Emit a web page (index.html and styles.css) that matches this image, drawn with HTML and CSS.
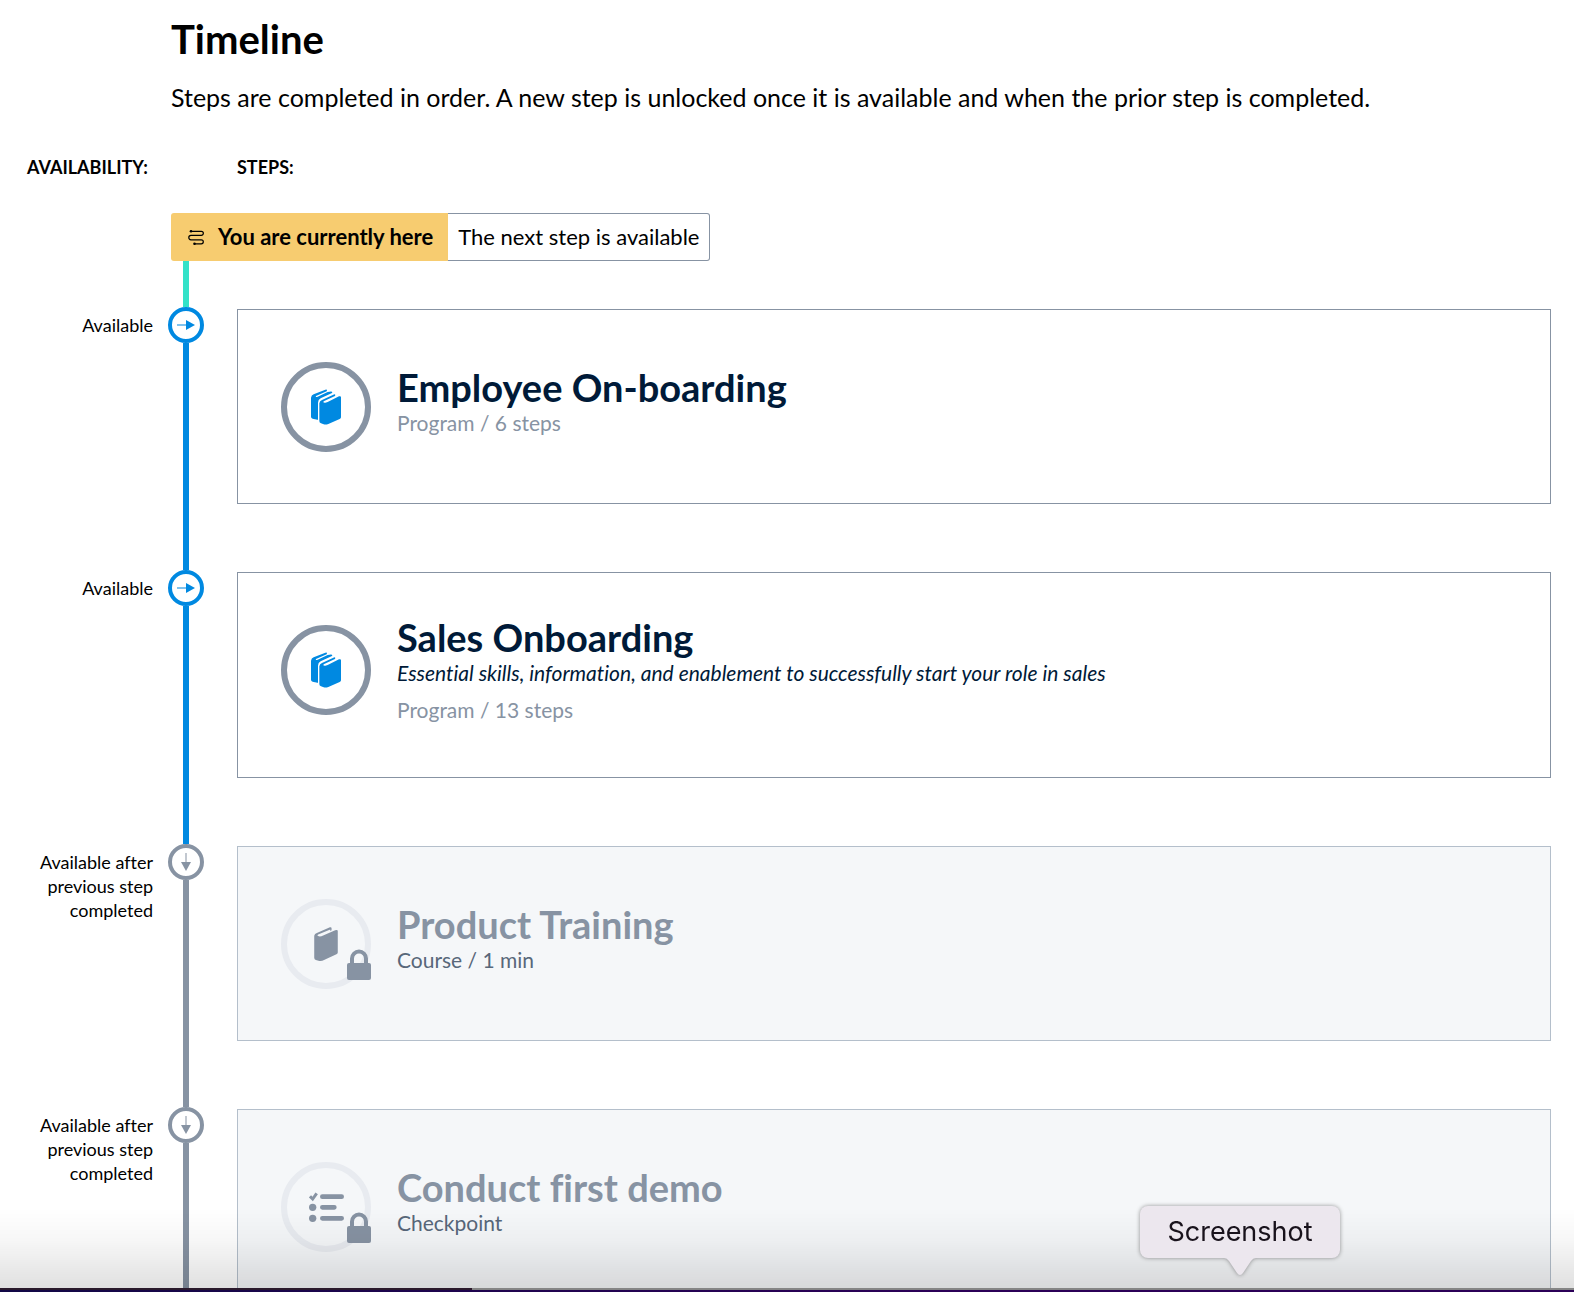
FILE: index.html
```html
<!DOCTYPE html>
<html lang="en">
<head>
    <meta charset="UTF-8">
    <meta name="viewport" content="width=device-width, initial-scale=1.0">
    <title>Timeline</title>
    <link rel="stylesheet" href="styles.css">
</head>
<body>
    <!-- Shared icons -->
    <svg class="sprite" aria-hidden="true">
        <symbol id="arrow" viewBox="0 0 18 12">
            <path d="M0 6h10" stroke="currentColor" stroke-width="2" opacity="0.5"/>
            <path d="M9 1l9 5-9 5z" fill="currentColor"/>
        </symbol>
        <symbol id="books" viewBox="0 0 90 106">
            <path fill="currentColor" d="M0 25Q1 18 8 15L43 1Q48-1 48 3L47 6L15 20Q12 24 20 22L50 8Q64 4 64 9L63 11L29 27Q21 31 21 40V91Q18 92 12 90L5 88Q0 86 0 82Z"/>
            <path fill="currentColor" d="M25 42Q26 35 33 32L67 16Q72 13 73 17L72 20L38 36Q34 41 43 40L50 38L84 21Q90 19 90 24V84Q90 87 86 89L52 104Q44 107 38 105L30 102Q25 100 25 95Z"/>
        </symbol>
        <symbol id="book" viewBox="0 0 72 104">
            <path fill="currentColor" d="M0 27Q1 20 8 18L48 1Q53 0 53 4V10L49 12V8L12 23Q6 28 17 29L22 28L64 10Q72 7 72 12V78Q72 81 68 83L30 101Q22 105 13 103L5 101Q0 99 0 94Z"/>
        </symbol>
        <symbol id="checklist" viewBox="0 0 105 90">
            <g fill="none" stroke="currentColor" stroke-linecap="round">
                <path d="M3 13l8 8L23 4" stroke-width="9" stroke-linecap="butt"/>
                <path d="M40 14h58M40 46h36M40 79h58" stroke-width="14"/>
            </g>
            <circle cx="11" cy="46" r="11" fill="currentColor"/>
            <circle cx="11" cy="79" r="11" fill="currentColor"/>
        </symbol>
        <symbol id="lock" viewBox="0 0 24 31">
            <path d="M5 15V9.500a7 7 0 0 1 14 0V15" fill="none" stroke="currentColor" stroke-width="4"/>
            <rect y="14" width="24" height="17" rx="2" fill="currentColor"/>
        </symbol>
    </svg>

    <main class="timeline">
        <header class="intro">
            <h1>Timeline</h1>
            <p>Steps are completed in order. A new step is unlocked once it is available and when the prior step is completed.</p>
        </header>

        <div class="columns">
            <span class="col-availability">Availability:</span>
            <span class="col-steps">Steps:</span>
        </div>

        <div class="current">
            <strong class="current-here">
                <svg class="icon-path" viewBox="0 0 16 15" fill="none" stroke="currentColor" stroke-width="1.200" aria-hidden="true">
                    <path d="M3 1.300h10.300a2 2 0 0 1 0 4.100H3a2.200 2.200 0 0 0 0 4.400h10.300a2 2 0 0 1 0 4H6"/>
                    <circle cx="3" cy="1.300" r="1.300" fill="currentColor" stroke="none"/>
                    <circle cx="6.500" cy="13.700" r="1.300" fill="currentColor" stroke="none"/>
                </svg>
                You are currently here
            </strong>
            <span class="current-next">The next step is available</span>
        </div>

        <ol class="steps">
            <li class="step">
                <p class="when">Available</p>
                <div class="track">
                    <span class="marker"><svg><use href="#arrow"/></svg></span>
                </div>
                <article class="card">
                    <div class="badge"><svg class="icon-books"><use href="#books"/></svg></div>
                    <div class="info">
                        <h2>Employee On-boarding</h2>
                        <p class="meta">Program / 6 steps</p>
                    </div>
                </article>
            </li>

            <li class="step">
                <p class="when">Available</p>
                <div class="track">
                    <span class="marker"><svg><use href="#arrow"/></svg></span>
                </div>
                <article class="card">
                    <div class="badge"><svg class="icon-books"><use href="#books"/></svg></div>
                    <div class="info">
                        <h2>Sales Onboarding</h2>
                        <p class="summary">Essential skills, information, and enablement to successfully start your role in sales</p>
                        <p class="meta">Program / 13 steps</p>
                    </div>
                </article>
            </li>

            <li class="step locked">
                <p class="when">Available after previous step completed</p>
                <div class="track">
                    <span class="marker"><svg><use href="#arrow"/></svg></span>
                </div>
                <article class="card">
                    <div class="badge">
                        <svg class="icon-book"><use href="#book"/></svg>
                        <svg class="icon-lock"><use href="#lock"/></svg>
                    </div>
                    <div class="info">
                        <h2>Product Training</h2>
                        <p class="meta">Course / 1 min</p>
                    </div>
                </article>
            </li>

            <li class="step locked">
                <p class="when">Available after previous step completed</p>
                <div class="track">
                    <span class="marker"><svg><use href="#arrow"/></svg></span>
                </div>
                <article class="card">
                    <div class="badge">
                        <svg class="icon-list"><use href="#checklist"/></svg>
                        <svg class="icon-lock"><use href="#lock"/></svg>
                    </div>
                    <div class="info">
                        <h2>Conduct first demo</h2>
                        <p class="meta">Checkpoint</p>
                    </div>
                </article>
            </li>
        </ol>
    </main>

    <div class="shade"></div>
    <div class="dock-edge"></div>
    <div class="tooltip" role="tooltip">
        Screenshot
        <svg class="tooltip-tip" viewBox="0 0 32 18"><path d="M0 0Q3 0 5 3L13 15Q16 19 19 15L27 3Q29 0 32 0Z"/></svg>
    </div>
</body>
</html>
```
FILE: styles.css
```css
* {
    box-sizing: border-box;
    margin: 0;
    padding: 0;
}

body {
    font-family: Avenir, Lato, sans-serif;
    font-variant-ligatures: none;
    color: #000;
    background-color: #fff;
    height: 100vh;
    overflow: hidden;
}

.sprite {
    display: none;
}

svg {
    display: block;
}

.timeline {
    padding: 15px 23px 0 0;
}

.intro {
    padding-left: 171px;
}

h1 {
    font-size: 40px;
    line-height: 48px;
}

.intro p {
    font-size: 25px;
    line-height: 36px;
    margin-top: 16px;
}

.columns {
    display: flex;
    margin-top: 40px;
    font-size: 18px;
    font-weight: bold;
    line-height: 24px;
    text-transform: uppercase;
}

.col-availability {
    width: 237px;
    padding-left: 27px;
}

.current {
    display: flex;
    margin: 34px 0 0 171px;
    font-size: 22px;
    line-height: 48px;
}

.current-here {
    display: flex;
    align-items: center;
    gap: 14px;
    padding: 0 15px 0 17px;
    background-color: #f7cc70;
    border-radius: 3px 0 0 3px;
}

.icon-path {
    width: 16px;
    height: 15px;
}

.current-next {
    padding: 0 10px;
    line-height: 46px;
    border: 1px solid #8793a3;
    border-left: none;
    border-radius: 0 3px 3px 0;
}

.steps {
    list-style: none;
}

/* first piece of the line, under the banner */
.steps::before {
    content: "";
    display: block;
    width: 6px;
    height: 46px;
    margin-left: 183px;
    background-color: #33e2c8;
}

.step {
    display: grid;
    grid-template-columns: 168px 36px 1fr;
    color: #0089e1;
}

.step.locked {
    color: #8793a3;
}

.when {
    padding: 6px 15px 0 30px;
    font-size: 18px;
    line-height: 24px;
    text-align: right;
    color: #000;
}

.track {
    display: flex;
    flex-direction: column;
    align-items: center;
}

.track::after {
    content: "";
    flex: 1;
    width: 6px;
    background-color: currentColor;
}

.marker {
    display: flex;
    align-items: center;
    justify-content: center;
    width: 36px;
    height: 36px;
    border: 4px solid currentColor;
    border-radius: 50%;
}

.marker svg {
    width: 18px;
    height: 12px;
}

.locked .marker svg {
    transform: rotate(90deg);
}

.card {
    display: flex;
    gap: 26px;
    margin: 2px 0 66px 33px;
    padding: 44px 43px 51px;
    border: 1px solid #8793a3;
}

.locked .card {
    background-color: #f5f7f9;
    border-color: #b4bfcb;
}

.badge {
    position: relative;
    display: flex;
    align-items: center;
    justify-content: center;
    flex: none;
    width: 90px;
    height: 90px;
    margin-top: 8px;
    border: 6px solid #8793a3;
    border-radius: 50%;
}

.locked .badge {
    border-color: #e8ebf0;
}

.icon-books {
    width: 30px;
    height: 36px;
}

.icon-book {
    width: 24px;
    height: 34px;
}

.icon-list {
    width: 35px;
    height: 30px;
}

.icon-lock {
    position: absolute;
    right: -6px;
    bottom: 3px;
    width: 24px;
    height: 31px;
}

.info {
    display: flex;
    flex-direction: column;
    justify-content: center;
}

h2 {
    font-size: 38px;
    line-height: 40px;
    color: #001a38;
}

.summary {
    margin-bottom: 5px;
    font-size: 21px;
    font-style: italic;
    line-height: 32px;
    color: #001a38;
}

.meta {
    font-size: 21px;
    line-height: 32px;
    color: #8793a3;
}

.locked h2 {
    color: #8793a3;
}

.locked .meta {
    color: #58677a;
}

/* desktop dock showing over the bottom of the page */
.shade {
    position: fixed;
    inset: auto 0 4px;
    height: 80px;
    background: linear-gradient(transparent, rgba(0, 0, 0, 0.03) 40%, rgba(0, 0, 0, 0.12));
}

.dock-edge {
    position: fixed;
    inset: auto 0 0;
    height: 4px;
    background: linear-gradient(90deg, #2b1a2c 30%, #858585 30%) top / 100% 2px no-repeat, linear-gradient(90deg, #120846, #2b0057 60%);
}

.tooltip {
    position: fixed;
    right: 234px;
    bottom: 34px;
    width: 200px;
    font-family: Inter, sans-serif;
    font-size: 27px;
    line-height: 52px;
    text-align: center;
    color: #19131c;
    background-color: #ece7ee;
    border-radius: 8px;
    filter: drop-shadow(0 0 2px rgba(0, 0, 0, 0.4));
}

.tooltip-tip {
    position: absolute;
    top: 100%;
    left: 84px;
    width: 32px;
    height: 18px;
    fill: #ece7ee;
}
```
